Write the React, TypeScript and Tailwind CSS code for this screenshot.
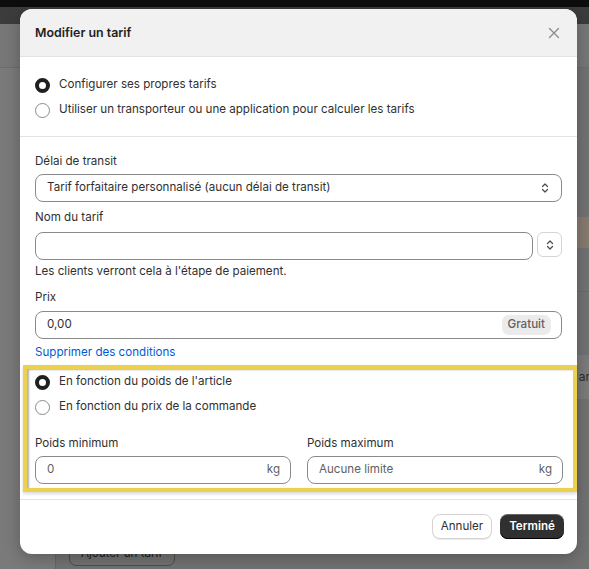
import React from "react";

function Radio({ checked, label }: { checked?: boolean; label: string }) {
  return (
    <label className="flex h-[16px] items-center gap-[9px]">
      {checked ? (
        <span className="h-[15px] w-[15px] rounded-full border-[4.5px] border-[#1f1f1f] bg-white" />
      ) : (
        <span className="h-[15px] w-[15px] rounded-full border border-[#8a8a8a] bg-white" />
      )}
      <span className="text-[11.6px] text-[#303030]">{label}</span>
    </label>
  );
}

function Chevrons() {
  return (
    <svg width="10" height="12" viewBox="0 0 10 12" fill="none" stroke="#4a4a4a" strokeWidth="1.2" strokeLinecap="round" strokeLinejoin="round">
      <path d="M2.5 4.5 5 2l2.5 2.5" />
      <path d="M2.5 7.5 5 10l2.5-2.5" />
    </svg>
  );
}

export default function App() {
  return (
    <div className="relative h-[569px] w-[589px] overflow-hidden bg-[#797979] font-['Inter',sans-serif] text-[11.6px]">
      {/* page behind the dialog */}
      <div className="h-[7px] bg-[#0d0d0d]" />
      <div className="h-[17px] bg-[#3c3c3c]" />
      <div className="h-[44px] border-b border-[#6c6c6c] bg-[#777777]" />
      <div className="flex h-[501px]">
        <div className="w-[55px] bg-[#7a7a7a]" />
        <div className="flex flex-1 flex-col border-l border-[#666] bg-[#727272]">
          <div className="h-[149px]" />
          <div className="h-[31px] bg-[#877a6f]" />
          <div className="h-[44px] border-b border-[#6a6a6a]" />
          <div className="h-[63px]" />
          <div className="flex h-[44px] items-center justify-end bg-[#7b7b7b] text-[12px] text-[#2a2a2a]">
            <span className="mr-[-1px]">ar</span>
          </div>
          <div className="flex-1 px-[13px] pt-[142px]">
            <div className="inline-flex h-[25px] items-center rounded-[7px] border border-[#4c4c4c] px-[11px] text-[11.6px] text-[#1e1e1e]">
              Ajouter un tarif
            </div>
          </div>
        </div>
      </div>

      {/* dialog */}
      <div className="absolute left-[20px] top-[9px] w-[557px] rounded-[12px] bg-white shadow-[0_4px_16px_rgba(0,0,0,0.25)]">
        <div className="flex h-[48px] items-center justify-between rounded-t-[12px] border-b border-[#e3e3e3] bg-[#f1f1f1] pl-[15px] pr-[17px] pt-[1px]">
          <h2 className="text-[12.4px] font-semibold text-[#1f1f1f]">Modifier un tarif</h2>
          <svg width="12" height="12" viewBox="0 0 12 12" stroke="#8a8a8a" strokeWidth="1.3" strokeLinecap="round">
            <path d="M1.5 1.5l9 9M10.5 1.5l-9 9" />
          </svg>
        </div>

        <div className="flex flex-col gap-[9px] border-b border-[#e3e3e3] px-[15px] pb-[18px] pt-[20px]">
          <Radio checked label="Configurer ses propres tarifs" />
          <Radio label="Utiliser un transporteur ou une application pour calculer les tarifs" />
        </div>

        <div className="border-b border-[#e3e3e3] px-[15px] pb-[7px] pt-[16px]">
          <div className="leading-[16px] text-[#303030]">Délai de transit</div>
          <div className="mt-[5px] flex h-[28px] items-center justify-between rounded-[8px] border border-[#8a8a8a] pl-[11px] pr-[11px]">
            <span className="text-[#303030]">Tarif forfaitaire personnalisé (aucun délai de transit)</span>
            <Chevrons />
          </div>

          <div className="mt-[7px] leading-[16px] text-[#303030]">Nom du tarif</div>
          <div className="mt-[7px] flex items-start gap-[4px]">
            <div className="h-[28px] flex-1 rounded-[8px] border border-[#8a8a8a]" />
            <div className="flex h-[25px] w-[25px] items-center justify-center rounded-[6px] border border-[#d4d4d4] bg-white">
              <Chevrons />
            </div>
          </div>
          <div className="mt-[3px] leading-[16px] text-[#303030]">Les clients verront cela à l'étape de paiement.</div>

          <div className="mt-[10px] leading-[16px] text-[#303030]">Prix</div>
          <div className="mt-[6px] flex h-[28px] items-center justify-between rounded-[8px] border border-[#8a8a8a] pl-[11px] pr-[10px]">
            <span className="text-[#303030]">0,00</span>
            <span className="rounded-[7px] bg-[#ebebeb] px-[6px] py-[1px] font-medium text-[#616161]">Gratuit</span>
          </div>
          <div className="mt-[5px] leading-[16px] text-[#005bd3]">Supprimer des conditions</div>

          <div className="ml-[-12px] mr-[-15px] mt-[5px] border-[4px] border-[#ecd04f] pb-[4px] pl-[8px] pr-[10px] pt-[5px] shadow-[inset_2px_1px_2px_rgba(0,0,0,0.3),0_2px_3px_rgba(0,0,0,0.15)]">
            <div className="flex flex-col gap-[9px]">
              <Radio checked label="En fonction du poids de l'article" />
              <Radio label="En fonction du prix de la commande" />
            </div>
            <div className="mt-[20px] grid grid-cols-2 gap-[16px]">
              <div>
                <div className="leading-[16px] text-[#303030]">Poids minimum</div>
                <div className="mt-[5px] flex h-[28px] items-center justify-between rounded-[8px] border border-[#8a8a8a] pl-[11px] pr-[10px]">
                  <span className="text-[#616161]">0</span>
                  <span className="text-[#616161]">kg</span>
                </div>
              </div>
              <div>
                <div className="leading-[16px] text-[#303030]">Poids maximum</div>
                <div className="mt-[5px] flex h-[28px] items-center justify-between rounded-[8px] border border-[#8a8a8a] pl-[11px] pr-[10px]">
                  <span className="text-[#616161]">Aucune limite</span>
                  <span className="text-[#616161]">kg</span>
                </div>
              </div>
            </div>
          </div>
        </div>

        <div className="flex justify-end gap-[8px] pb-[15px] pl-[13px] pr-[13px] pt-[14px]">
          <button className="h-[25px] w-[60px] rounded-[8px] border border-[#d4d4d4] bg-white text-[11.6px] text-[#303030] shadow-[0_1px_0_rgba(0,0,0,0.08)]">
            Annuler
          </button>
          <button className="h-[25px] w-[64px] rounded-[8px] bg-[#303030] text-[11.6px] font-semibold text-white shadow-[inset_0_-1px_0_#000,inset_0_1px_0_rgba(255,255,255,0.25)]">
            Terminé
          </button>
        </div>
      </div>
    </div>
  );
}
